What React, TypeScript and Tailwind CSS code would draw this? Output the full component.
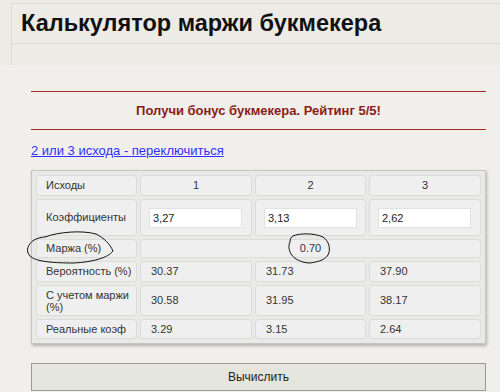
const odds = ["3,27", "3,13", "2,62"];
const prob = ["30.37", "31.73", "37.90"];
const withMargin = ["30.58", "31.95", "38.17"];
const real = ["3.29", "3.15", "2.64"];

const cell = "bg-[#efefef] border border-[#dcdcdc] rounded-[3px] flex items-center text-[11px] text-[#333]";

export default function App() {
  return (
    <div className="relative w-[500px] h-[392px] overflow-hidden bg-[#f0efeb] font-['Liberation_Sans',Arial,sans-serif]">
      {/* Header */}
      <div className="bg-[#ecebe6]">
        <div className="pt-[3px]">
          <div className="ml-[11px] h-[41px] border-t border-b border-l border-[#dcdbd5] flex items-center">
            <h1 className="pl-[9px] text-[23.5px] font-bold text-[#111] leading-none">Калькулятор маржи букмекера</h1>
          </div>
          <div className="ml-[11px] h-[21px] border-l border-[#dcdbd5]"></div>
        </div>
      </div>

      {/* Content */}
      <div className="ml-[31px] w-[455px]">
        <div className="mt-[26px] border-t border-b border-[#9e2b25] h-[39px] flex items-center justify-center">
          <span className="text-[13px] font-bold text-[#8c1c15]">Получи бонус букмекера. Рейтинг 5/5!</span>
        </div>

        <a href="#" className="block mt-[13px] text-[13px] leading-[15px] text-[#3030ff] underline">
          2 или 3 исхода - переключиться
        </a>

        <div className="mt-[12px] border border-[#c4c4c0] bg-[#e9e9e7] p-[4px] shadow-[1px_2px_3px_rgba(0,0,0,0.25)]">
          <div className="grid grid-cols-[101px_112px_111px_112px] grid-rows-[21px_37px_19px_21px_31px_20px] gap-[3px]">
            <div className={`${cell} pl-[9px]`}>Исходы</div>
            {["1", "2", "3"].map((n) => (
              <div key={n} className={`${cell} justify-center text-[#3a2222]`}>{n}</div>
            ))}

            <div className={`${cell} pl-[9px]`}>Коэффициенты</div>
            {odds.map((v, i) => (
              <div key={i} className={`${cell} pl-[8px]`}>
                <input
                  defaultValue={v}
                  className="w-[93px] h-[20px] bg-white border border-[#e2e2e2] px-[3px] text-[11px] text-[#222] outline-none"
                />
              </div>
            ))}

            <div className={`${cell} pl-[9px]`}>Маржа (%)</div>
            <div className={`${cell} col-span-3 justify-center`}>0.70</div>

            <div className={`${cell} pl-[9px]`}>Вероятность (%)</div>
            {prob.map((v, i) => (
              <div key={i} className={`${cell} pl-[10px]`}>{v}</div>
            ))}

            <div className={`${cell} pl-[9px] leading-[12px]`}>С учетом маржи<br />(%)</div>
            {withMargin.map((v, i) => (
              <div key={i} className={`${cell} pl-[10px]`}>{v}</div>
            ))}

            <div className={`${cell} pl-[9px]`}>Реальные коэф</div>
            {real.map((v, i) => (
              <div key={i} className={`${cell} pl-[10px]`}>{v}</div>
            ))}
          </div>
        </div>

        <button className="mt-[19px] w-full h-[28px] bg-[#e4e5dc] border border-[#9a9a96] text-[12px] text-[#222]">
          Вычислить
        </button>
      </div>

      {/* hand-drawn annotations */}
      <svg className="absolute left-0 top-0 pointer-events-none" width="500" height="392" viewBox="0 0 500 392">
        <path
          d="M45 237 C58 232 82 230 96 234 C104 238 110 244 113 251 C108 258 92 262 74 263 C55 263 36 262 30 256 C25 251 28 244 34 240 C38 238 42 237 45 237"
          fill="none"
          stroke="#111"
          strokeWidth="1"
        />
        <path
          d="M293 236 C300 233 314 233 323 237 C329 241 331 249 328 255 C324 261 316 262 310 263 C302 263 294 259 291 254 C289 250 288 246 290 242 C290 239 291 237 293 236"
          fill="none"
          stroke="#111"
          strokeWidth="1"
        />
      </svg>
    </div>
  );
}
